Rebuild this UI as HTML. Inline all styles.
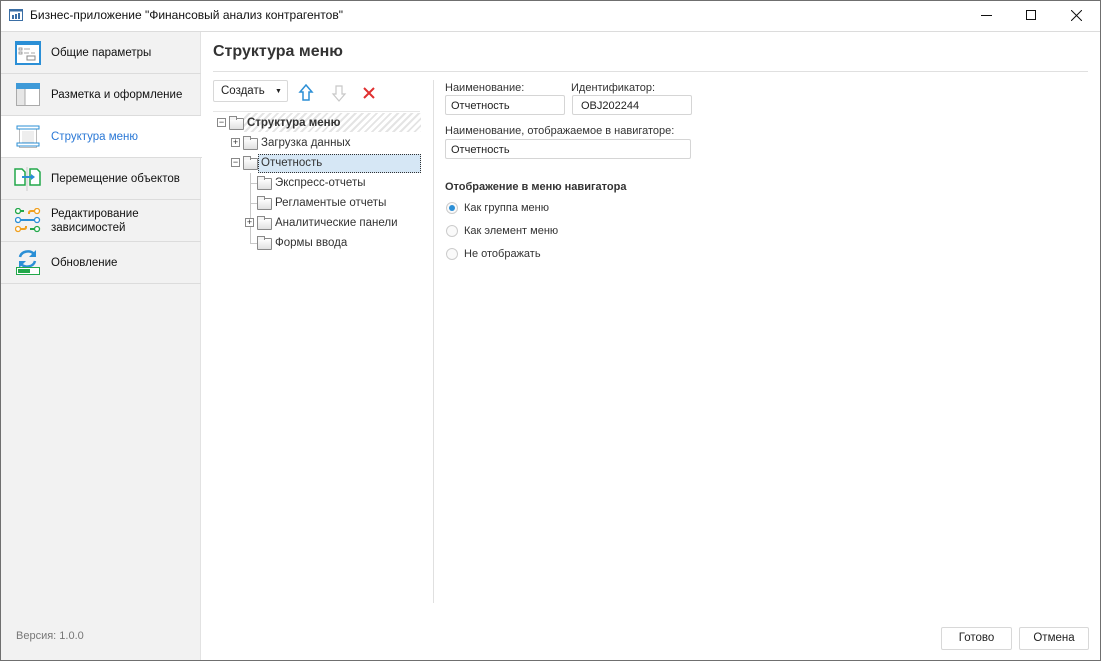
<!DOCTYPE html>
<html><head><meta charset="utf-8"><style>
*{box-sizing:border-box;margin:0;padding:0}
body{width:1101px;height:661px;position:relative;overflow:hidden;background:#fff;font-family:"Liberation Sans","DejaVu Sans",sans-serif;font-size:12px;color:#222}
.a{position:absolute}
.win{left:0;top:0;width:1101px;height:661px;border:1px solid #6f6f6f}
.side{left:1px;top:32px;width:200px;height:628px;background:#f2f2f2;border-right:1px solid #e2e2e2}
.item{position:absolute;left:0;width:200px;height:42px;border-bottom:1px solid #dcdcdc;font-size:11.5px;color:#111}
.item .t{position:absolute;left:50px;top:15px}
.item.sel{background:#fff;width:201px}
.inp{position:absolute;border:1px solid #d5d5d5;border-radius:2px;height:20px;padding:4px 5px;font-size:11px}
.lbl{position:absolute;font-size:11px;color:#333}
.radio{position:absolute;width:12px;height:12px;border:1px solid #ccc;border-radius:50%;background:#fafafa}
.tr{position:absolute;font-size:11.5px;color:#333}
.box{position:absolute;width:9px;height:9px;border:1px solid #888;background:#fff;font-size:9px;line-height:7px;text-align:center;color:#333}
.fold{position:absolute;width:15px;height:12px;border:1px solid #8a8a8a;background:linear-gradient(#fff,#e0e0e0);border-radius:1px}
.fold:before{content:"";position:absolute;left:-1px;top:-3px;width:6px;height:3px;border:1px solid #8a8a8a;border-bottom:none;background:#f4f4f4}
.btn{position:absolute;border:1px solid #d8d8d8;border-radius:2px;background:#fff;font-size:11.5px;text-align:center;line-height:21px}
</style></head><body>
<div class="a win"></div>
<svg class="a" style="left:9px;top:9px" width="14" height="12"><rect x="0.5" y="0.5" width="13" height="11" fill="#fff" stroke="#3a6ea5"/><rect x="0.5" y="0.5" width="13" height="2" fill="#3a6ea5"/><rect x="3" y="6" width="2" height="4" fill="#3a6ea5"/><rect x="6" y="5" width="2" height="5" fill="#3a6ea5"/><rect x="9" y="4" width="2" height="6" fill="#3a6ea5"/></svg>
<div class="a" style="left:30px;top:8px;font-size:12px;color:#111">Бизнес-приложение "Финансовый анализ контрагентов"</div>
<div class="a" style="left:981px;top:15px;width:11px;height:1px;background:#111"></div>
<div class="a" style="left:1026px;top:10px;width:10px;height:10px;border:1px solid #111"></div>
<svg class="a" style="left:1071px;top:10px" width="11" height="11"><path d="M0 0L11 11M11 0L0 11" stroke="#111" stroke-width="1"/></svg>
<div class="a" style="left:1px;top:31px;width:1099px;height:1px;background:#dcdcdc"></div>
<div class="a side">
 <div class="item" style="top:0">
  <svg class="a" style="left:14px;top:9px" width="26" height="24"><rect x="1" y="1" width="24" height="22" fill="#fff" stroke="#2b8fd6" stroke-width="2"/><rect x="1" y="1" width="24" height="3" fill="#2b8fd6"/><rect x="4" y="7" width="3" height="2" fill="none" stroke="#888" stroke-width=".8"/><rect x="4" y="11" width="3" height="2" fill="none" stroke="#888" stroke-width=".8"/><path d="M9 8h6M9 12h5M16 12h4" stroke="#aaa"/><rect x="12" y="15" width="8" height="4" fill="none" stroke="#888"/></svg>
  <span class="t">Общие параметры</span></div>
 <div class="item" style="top:42px">
  <svg class="a" style="left:15px;top:9px" width="24" height="23"><rect x="0.5" y="0.5" width="23" height="22" fill="#fff" stroke="#aaa"/><rect x="0" y="0" width="24" height="6" fill="#3e9ad8"/><rect x="1" y="6" width="8" height="16" fill="#e6e6e6"/><path d="M9 6v17" stroke="#aaa"/></svg>
  <span class="t">Разметка и оформление</span></div>
 <div class="item sel" style="top:84px">
  <svg class="a" style="left:15px;top:9px" width="24" height="25"><rect x="3.5" y="2.5" width="17" height="20" fill="#fff" stroke="#bbb"/><path d="M6 7h12M6 9h12M6 11h12M6 13h12M6 15h12M6 17h12" stroke="#ddd"/><rect x="1" y="1" width="22" height="3" fill="#fff" stroke="#2b8fd6"/><rect x="1" y="18" width="22" height="3" fill="#fff" stroke="#2b8fd6"/></svg>
  <span class="t" style="color:#2a78d6">Структура меню</span></div>
 <div class="item" style="top:126px">
  <svg class="a" style="left:13px;top:9px" width="28" height="24"><path d="M1 2h7l3 3v13H1z" fill="#fff" stroke="#22a84a" stroke-width="1.5"/><path d="M16 2h7l3 3v13H16z" fill="#fff" stroke="#22a84a" stroke-width="1.5"/><path d="M13 0v24" stroke="#ccc"/><path d="M8 10h10" stroke="#2b8fd6" stroke-width="2"/><path d="M17 7l4 3-4 3z" fill="#2b8fd6"/></svg>
  <span class="t">Перемещение объектов</span></div>
 <div class="item" style="top:168px">
  <svg class="a" style="left:14px;top:8px" width="26" height="26"><g fill="#fff" stroke-width="1.3"><circle cx="3" cy="3" r="2.5" stroke="#22a84a"/><circle cx="22" cy="3" r="2.5" stroke="#f0a020"/><circle cx="3" cy="12" r="2.5" stroke="#2b8fd6"/><circle cx="22" cy="12" r="2.5" stroke="#2b8fd6"/><circle cx="3" cy="21" r="2.5" stroke="#f0a020"/><circle cx="22" cy="21" r="2.5" stroke="#22a84a"/></g><path d="M6 3h3" stroke="#22a84a" stroke-width="2"/><path d="M19 3h-3q-2 0-2 2v1" stroke="#f0a020" stroke-width="2" fill="none"/><path d="M6 12h13" stroke="#2b8fd6" stroke-width="2"/><path d="M6 21h3q2 0 2-2v-1" stroke="#f0a020" stroke-width="2" fill="none"/><path d="M15 21h4" stroke="#22a84a" stroke-width="2"/></svg>
  <span class="t" style="top:7px;line-height:14px">Редактирование<br>зависимостей</span></div>
 <div class="item" style="top:210px">
  <svg class="a" style="left:14px;top:6px" width="26" height="28"><path d="M5 9a8 7 0 0 1 14-3" stroke="#2b8fd6" stroke-width="2.5" fill="none"/><path d="M21 2v7h-7z" fill="#2b8fd6"/><path d="M20 13a8 7 0 0 1-14 3" stroke="#2b8fd6" stroke-width="2.5" fill="none"/><path d="M4 20v-7h7z" fill="#2b8fd6"/><rect x="1.5" y="19.5" width="23" height="7" fill="#fff" stroke="#22a84a"/><rect x="3" y="21" width="12" height="4" fill="#22a84a"/></svg>
  <span class="t">Обновление</span></div>
 <div class="a" style="left:15px;top:598px;font-size:11px;color:#777">Версия: 1.0.0</div>
</div>
<div class="a" style="left:213px;top:43px;font-size:16px;font-weight:bold;color:#333">Структура меню</div>
<div class="a" style="left:213px;top:71px;width:875px;height:1px;background:#e0e0e0"></div>
<div class="btn" style="left:213px;top:80px;width:75px;height:22px;text-align:left;padding-left:7px;font-size:11.5px">Создать<span style="position:absolute;left:61px;top:0;font-size:7px">▼</span></div>
<svg class="a" style="left:298px;top:84px" width="16" height="18"><path d="M8 1L14 8H11V16H5V8H2Z" fill="#fff" stroke="#2b8fd6" stroke-width="1.5"/></svg>
<svg class="a" style="left:331px;top:85px" width="16" height="18"><path d="M5 1H11V9H14L8 16L2 9H5Z" fill="#fff" stroke="#c8c8c8" stroke-width="1.2"/></svg>
<svg class="a" style="left:363px;top:87px" width="12" height="12"><path d="M1 1L11 11M11 1L1 11" stroke="#e03030" stroke-width="2"/></svg>
<div class="a" style="left:213px;top:111px;width:207px;height:1px;background:#e6e6e6"></div>
<div class="a" style="left:244px;top:113px;width:177px;height:19px;background:repeating-linear-gradient(135deg,#fff 0 3px,#e4e4e4 3px 5px)"></div>
<div class="a" style="left:250px;top:173px;width:1px;height:70px;background:#c8c8c8"></div>
<div class="a" style="left:250px;top:183px;width:7px;height:1px;background:#c8c8c8"></div>
<div class="a" style="left:250px;top:203px;width:7px;height:1px;background:#c8c8c8"></div>
<div class="a" style="left:250px;top:243px;width:7px;height:1px;background:#c8c8c8"></div>
<div class="box" style="left:217px;top:118px">−</div><div class="fold" style="left:229px;top:118px"></div>
<div class="tr" style="left:247px;top:117px;font-weight:bold">Структура меню</div>
<div class="box" style="left:231px;top:138px">+</div><div class="fold" style="left:243px;top:138px"></div>
<div class="tr" style="left:261px;top:137px">Загрузка данных</div>
<div class="box" style="left:231px;top:158px">−</div><div class="fold" style="left:243px;top:158px"></div>
<div class="a" style="left:258px;top:154px;width:163px;height:19px;background:#d6e7f5;border:1px dotted #333"></div>
<div class="tr" style="left:261px;top:157px">Отчетность</div>
<div class="fold" style="left:257px;top:178px"></div><div class="tr" style="left:275px;top:177px">Экспресс-отчеты</div>
<div class="fold" style="left:257px;top:198px"></div><div class="tr" style="left:275px;top:197px">Регламентые отчеты</div>
<div class="box" style="left:245px;top:218px">+</div><div class="fold" style="left:257px;top:218px"></div><div class="tr" style="left:275px;top:217px">Аналитические панели</div>
<div class="fold" style="left:257px;top:238px"></div><div class="tr" style="left:275px;top:237px">Формы ввода</div>
<div class="a" style="left:433px;top:80px;width:1px;height:523px;background:#e0e0e0"></div>
<div class="lbl" style="left:445px;top:82px">Наименование:</div>
<div class="lbl" style="left:571px;top:82px">Идентификатор:</div>
<div class="inp" style="left:445px;top:95px;width:120px">Отчетность</div>
<div class="inp" style="left:572px;top:95px;width:120px;padding-left:8px">OBJ202244</div>
<div class="lbl" style="left:445px;top:125px">Наименование, отображаемое в навигаторе:</div>
<div class="inp" style="left:445px;top:139px;width:246px">Отчетность</div>
<div class="lbl" style="left:445px;top:181px;font-weight:bold">Отображение в меню навигатора</div>
<div class="radio" style="left:446px;top:202px"><div class="a" style="left:2px;top:2px;width:6px;height:6px;border-radius:50%;background:#2b8fd6"></div></div>
<div class="lbl" style="left:464px;top:202px">Как группа меню</div>
<div class="radio" style="left:446px;top:225px"></div>
<div class="lbl" style="left:464px;top:225px">Как элемент меню</div>
<div class="radio" style="left:446px;top:248px"></div>
<div class="lbl" style="left:464px;top:248px">Не отображать</div>
<div class="btn" style="left:941px;top:627px;width:71px;height:23px">Готово</div>
<div class="btn" style="left:1019px;top:627px;width:70px;height:23px">Отмена</div>
</body></html>
